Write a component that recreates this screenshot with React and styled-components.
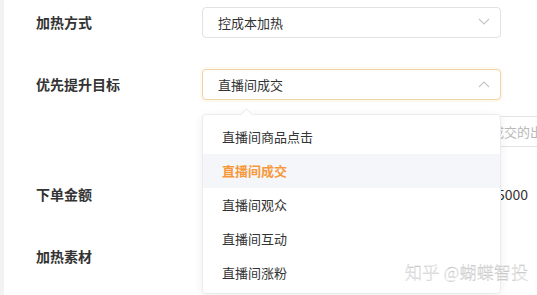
import React from 'react';
import styled, { createGlobalStyle, css } from 'styled-components';

const GlobalStyle = createGlobalStyle`
  html, body {
    margin: 0;
    padding: 0;
    background: #fff;
    font-family: "Noto Sans CJK SC", "Noto Sans", sans-serif;
  }
`;

const Page = styled.div`
  display: flex;
  width: 537px;
  height: 295px;
  overflow: hidden;
  position: relative;
  background: #fff;
`;

const SideStrip = styled.div`
  width: 4px;
  flex-shrink: 0;
  background: #f2f2f4;
`;

const Form = styled.div`
  display: flex;
  flex-direction: column;
  padding: 7px 0 0 32px;
  flex: 1;
`;

const Row = styled.div`
  display: flex;
  align-items: center;
  height: 30px;
  margin-bottom: ${p => p.$gap}px;
`;

const Label = styled.div`
  width: 166px;
  flex-shrink: 0;
  font-size: 14px;
  font-weight: 700;
  color: #333;
`;

const FieldWrap = styled.div`
  position: relative;
`;

const Select = styled.div`
  box-sizing: border-box;
  width: 299px;
  height: 31px;
  display: flex;
  align-items: center;
  justify-content: space-between;
  padding: 0 10px 0 15px;
  border: 1px solid #e2e2e2;
  border-radius: 4px;
  font-size: 13px;
  color: #333;
  background: #fff;
  ${p => p.$open && css`
    border-color: #efd3a6;
    box-shadow: 0 0 0 2px rgba(255, 176, 70, 0.08);
  `}
`;

const Input = styled.div`
  box-sizing: border-box;
  width: 380px;
  height: 31px;
  display: flex;
  align-items: center;
  padding: 0 15px;
  border: 1px solid #e4e4e4;
  border-radius: 4px;
  font-size: 13px;
  color: #b8b8b8;
  white-space: nowrap;
  overflow: hidden;
`;

const Value = styled.div`
  width: 326px;
  text-align: right;
  font-size: 14px;
  color: #333;
`;

const Dropdown = styled.div`
  position: absolute;
  left: 0;
  top: 45px;
  width: 299px;
  box-sizing: border-box;
  background: #fff;
  border: 1px solid #ececec;
  border-radius: 4px;
  box-shadow: 0 2px 10px rgba(0, 0, 0, 0.07);
  padding: 5px 0 3px;
  z-index: 10;
`;

const Arrow = styled.div`
  position: absolute;
  top: -5px;
  left: 39px;
  width: 8px;
  height: 8px;
  background: #fff;
  border-left: 1px solid #ececec;
  border-top: 1px solid #ececec;
  transform: rotate(45deg);
`;

const Option = styled.div`
  height: 34px;
  display: flex;
  align-items: center;
  padding-left: 19px;
  font-size: 13px;
  color: #333;
  ${p => p.$active && css`
    background: #f5f6fa;
    color: #f7993b;
    font-weight: 700;
  `}
`;

const Watermark = styled.div`
  position: absolute;
  left: 405px;
  top: 259px;
  font-size: 17px;
  font-weight: 300;
  color: rgba(255, 255, 255, 0.95);
  -webkit-text-stroke: 0.35px #c2c2c2;
  letter-spacing: 0.3px;
  white-space: nowrap;
  z-index: 20;
`;

const Chevron = ({ up }) => (
  <svg width="12" height="8" viewBox="0 0 12 8" fill="none">
    <path
      d={up ? 'M1 7 L6 2 L11 7' : 'M1 1 L6 6 L11 1'}
      stroke="#c4c4c4"
      strokeWidth="1.1"
    />
  </svg>
);

const options = ['直播间商品点击', '直播间成交', '直播间观众', '直播间互动', '直播间涨粉'];

export default function App() {
  return (
    <Page>
      <GlobalStyle />
      <SideStrip />
      <Form>
        <Row $gap={32}>
          <Label>加热方式</Label>
          <Select>
            <span>控成本加热</span>
            <Chevron />
          </Select>
        </Row>
        <Row $gap={17}>
          <Label>优先提升目标</Label>
          <FieldWrap>
            <Select $open>
              <span>直播间成交</span>
              <Chevron up />
            </Select>
            <Dropdown>
              <Arrow />
              {options.map(o => (
                <Option key={o} $active={o === '直播间成交'}>{o}</Option>
              ))}
            </Dropdown>
          </FieldWrap>
        </Row>
        <Row $gap={33}>
          <Label />
          <Input>建议出价范围参考同行业同类型账号每次直播间成交的出价</Input>
        </Row>
        <Row $gap={32}>
          <Label>下单金额</Label>
          <Value>5000</Value>
        </Row>
        <Row $gap={0}>
          <Label>加热素材</Label>
        </Row>
      </Form>
      <Watermark>知乎 @蝴蝶智投</Watermark>
    </Page>
  );
}
